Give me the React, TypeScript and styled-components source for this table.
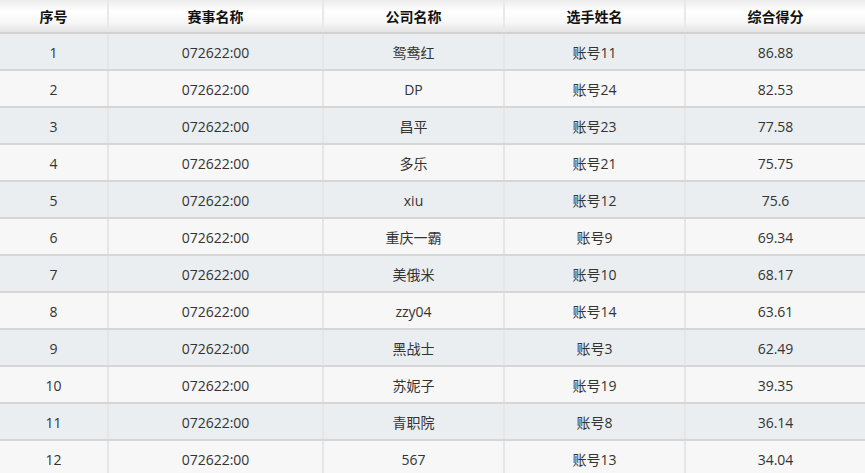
import React from "react";
import styled, { createGlobalStyle } from "styled-components";

const GlobalStyle = createGlobalStyle`
    html, body {
        margin: 0;
        padding: 0;
        background: #f7f7f7;
    }

    body {
        font-family: "Open Sans", "Noto Sans CJK SC", "Noto Sans", sans-serif;
    }
`;

const Table = styled.table`
    border-collapse: collapse;
    color: #333;
    font-size: 14px;
    table-layout: fixed;
    width: 865px;
`;

const HeadCell = styled.th`
    background: linear-gradient(to bottom, #ececec 0%, #ffffff 35%, #f7f7f7 70%, #e4e4e4 100%);
    border-bottom: 2px solid #d2d2d2;
    border-right: 2px solid #e9e9e9;
    color: #111;
    font-family: "Noto Sans CJK SC", sans-serif;
    font-size: 14px;
    font-weight: bold;
    height: 32px;
    padding: 0;
    text-align: center;

    &:last-child {
        border-right: none;
    }
`;

const Row = styled.tr<{ $odd: boolean }>`
    background-color: ${(p) => (p.$odd ? "#eaeef1" : "#f7f7f7")};
`;

const Cell = styled.td`
    border-bottom: 2px solid #d6d6d6;
    border-right: 2px solid #e6e6e6;
    height: 34px;
    line-height: 19px;
    padding: 1px 0 0;
    text-align: center;

    &:last-child {
        border-right: none;
    }
`;

const columns = [
    { title: "序号", width: 108 },
    { title: "赛事名称", width: 215 },
    { title: "公司名称", width: 181 },
    { title: "选手姓名", width: 181 },
    { title: "综合得分", width: 180 },
];

const rows = [
    ["鸳鸯红", "账号11", "86.88"],
    ["DP", "账号24", "82.53"],
    ["昌平", "账号23", "77.58"],
    ["多乐", "账号21", "75.75"],
    ["xiu", "账号12", "75.6"],
    ["重庆一霸", "账号9", "69.34"],
    ["美俄米", "账号10", "68.17"],
    ["zzy04", "账号14", "63.61"],
    ["黑战士", "账号3", "62.49"],
    ["苏妮子", "账号19", "39.35"],
    ["青职院", "账号8", "36.14"],
    ["567", "账号13", "34.04"],
];

const App: React.FC = () => {
    return (
        <>
            <GlobalStyle />
            <Table>
                <colgroup>
                    {columns.map((c) => (
                        <col key={c.title} style={{ width: c.width }} />
                    ))}
                </colgroup>
                <thead>
                    <tr>
                        {columns.map((c) => (
                            <HeadCell key={c.title}>{c.title}</HeadCell>
                        ))}
                    </tr>
                </thead>
                <tbody>
                    {rows.map((r, i) => (
                        <Row key={i} $odd={i % 2 === 0}>
                            <Cell>{i + 1}</Cell>
                            <Cell>072622:00</Cell>
                            <Cell>{r[0]}</Cell>
                            <Cell>{r[1]}</Cell>
                            <Cell>{r[2]}</Cell>
                        </Row>
                    ))}
                </tbody>
            </Table>
        </>
    );
};

export default App;
